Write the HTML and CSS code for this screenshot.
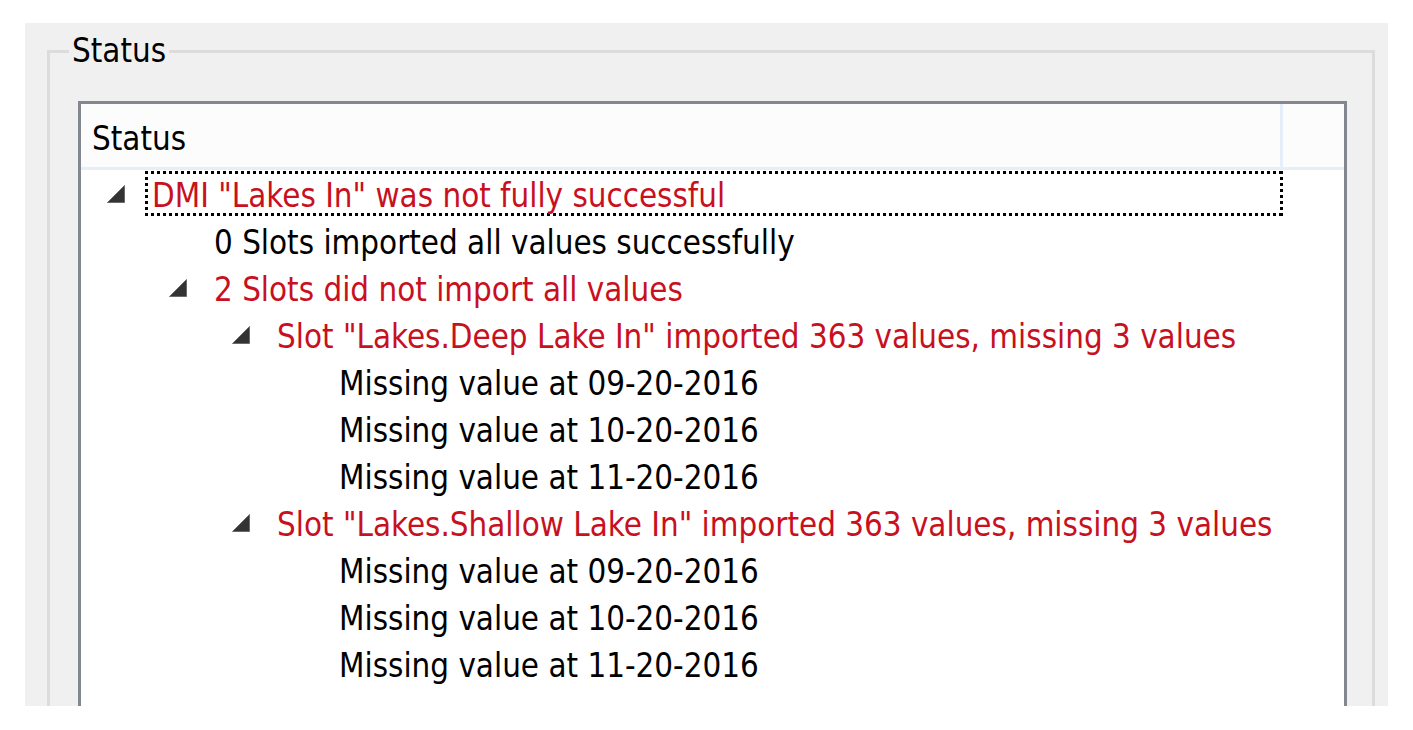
FILE: index.html
```html
<!DOCTYPE html>
<html lang="en">
<head>
<meta charset="utf-8">
<title>Status</title>
<link rel="stylesheet" href="styles.css">
</head>
<body>
<div class="panel">
  <fieldset class="group">
    <legend class="group-title">Status</legend>
    <div class="tree">
      <div class="tree-header">
        <div class="col-status">Status</div>
        <div class="col-fill"></div>
      </div>
      <div class="tree-rows">
        <div class="row lvl0">
          <span class="toggle"><svg width="18" height="18" viewBox="0 0 18 18"><polygon points="0.5,17.5 17.5,17.5 17.5,0.5" /></svg></span>
          <span class="label focus error">DMI "Lakes In" was not fully successful</span>
        </div>
        <div class="row lvl1">
          <span class="toggle"></span>
          <span class="label">0 Slots imported all values successfully</span>
        </div>
        <div class="row lvl1">
          <span class="toggle"><svg width="18" height="18" viewBox="0 0 18 18"><polygon points="0.5,17.5 17.5,17.5 17.5,0.5" /></svg></span>
          <span class="label error">2 Slots did not import all values</span>
        </div>
        <div class="row lvl2">
          <span class="toggle"><svg width="18" height="18" viewBox="0 0 18 18"><polygon points="0.5,17.5 17.5,17.5 17.5,0.5" /></svg></span>
          <span class="label error">Slot "Lakes.Deep Lake In" imported 363 values, missing 3 values</span>
        </div>
        <div class="row lvl3">
          <span class="toggle"></span>
          <span class="label">Missing value at 09-20-2016</span>
        </div>
        <div class="row lvl3">
          <span class="toggle"></span>
          <span class="label">Missing value at 10-20-2016</span>
        </div>
        <div class="row lvl3">
          <span class="toggle"></span>
          <span class="label">Missing value at 11-20-2016</span>
        </div>
        <div class="row lvl2">
          <span class="toggle"><svg width="18" height="18" viewBox="0 0 18 18"><polygon points="0.5,17.5 17.5,17.5 17.5,0.5" /></svg></span>
          <span class="label error">Slot "Lakes.Shallow Lake In" imported 363 values, missing 3 values</span>
        </div>
        <div class="row lvl3">
          <span class="toggle"></span>
          <span class="label">Missing value at 09-20-2016</span>
        </div>
        <div class="row lvl3">
          <span class="toggle"></span>
          <span class="label">Missing value at 10-20-2016</span>
        </div>
        <div class="row lvl3">
          <span class="toggle"></span>
          <span class="label">Missing value at 11-20-2016</span>
        </div>
      </div>
    </div>
  </fieldset>
</div>
</body>
</html>
```

FILE: styles.css
```css
html, body {
  margin: 0;
  padding: 0;
  background: #ffffff;
}

body {
  font-family: "DejaVu Sans Condensed", "DejaVu Sans", sans-serif;
  font-size: 32.8px;
  color: #000000;
  padding: 23px 0 0 25px;
  height: 730px;
  box-sizing: border-box;
  overflow: hidden;
}

.panel {
  width: 1363px;
  height: 683px;
  background: #f0f0f0;
  overflow: hidden;
  box-sizing: border-box;
  padding: 0 13px 0 22px;
}

.group {
  margin: 13px 0 0 0;
  padding: 0;
  border: 3px solid #dcdcdc;
  min-width: 0;
  height: 800px;
  box-sizing: border-box;
}

.group-title {
  padding: 0 3px;
  margin-left: 19px;
  line-height: 30px;
  height: 30px;
}

.tree {
  margin: 35px 25px 0 28px;
  border: 3px solid #828790;
  background: #ffffff;
  height: 700px;
}

.tree-header {
  display: flex;
  height: 63px;
  background: #fcfcfc;
  border-bottom: 3px solid #e5eef9;
}

.col-status {
  width: 1188px;
  border-right: 3px solid #e5eef9;
  padding-left: 11px;
  line-height: 70px;
  height: 63px;
  overflow: hidden;
  box-sizing: content-box;
}

.col-fill {
  flex: 1;
}

.tree-rows {
  width: 1202px;
}

.row {
  display: flex;
  align-items: center;
  height: 47px;
  padding-left: 26px;
  box-sizing: border-box;
  white-space: nowrap;
}

.lvl1 { padding-left: 88px; }
.lvl2 { padding-left: 151px; }
.lvl3 { padding-left: 213px; }

.toggle {
  width: 38px;
  flex: none;
  height: 18px;
  display: flex;
  align-items: center;
}

.toggle svg {
  display: block;
}

.toggle svg polygon {
  fill: #333333;
  stroke: #6a6a6a;
  stroke-width: 1;
}

.label {
  padding: 0 7px;
  line-height: 51px;
  height: 45px;
}

.focus {
  flex: 1;
  background:
    repeating-linear-gradient(90deg, #000 0 3px, transparent 3px 6px) left top / 100% 3px no-repeat,
    repeating-linear-gradient(90deg, #000 0 3px, transparent 3px 6px) left bottom / 100% 3px no-repeat,
    repeating-linear-gradient(180deg, #000 0 3px, transparent 3px 6px) left top / 3px 100% no-repeat,
    repeating-linear-gradient(180deg, #000 0 3px, transparent 3px 6px) right top / 3px 100% no-repeat;
}

.error {
  color: #c8101e;
}
```
